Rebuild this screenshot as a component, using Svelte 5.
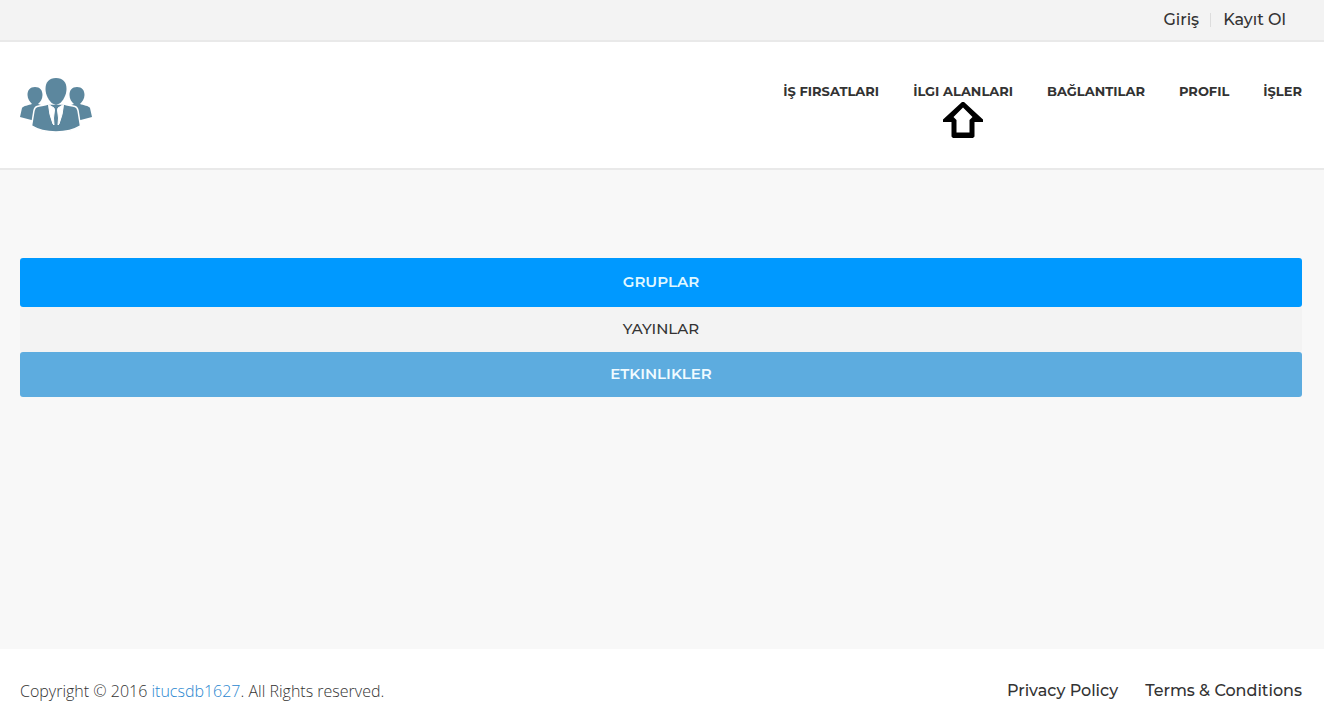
<script>
  const sections = ['İŞ FIRSATLARI', 'İLGI ALANLARI', 'BAĞLANTILAR', 'PROFIL', 'İŞLER'];
  const active = 'İLGI ALANLARI';
</script>

<div class="page">
  <div class="topbar">
    <a href="#giris">Giriş</a>
    <a href="#kayit">Kayıt Ol</a>
  </div>

  <header>
    <a class="logo" href="#home" aria-label="Ana sayfa">
      <svg viewBox="0 0 72 54" width="72" height="54" aria-hidden="true">
        <g fill="#5c879e">
          <path d="M15 9c5 0 7.500 3 7.500 8 0 4-2 7-4.500 9l6 2-5 16L0 39l2-9c1-2 7-3 10-4-2-2-4.500-5-4.500-9 0-5 2.500-8 7.500-8Z" />
          <path d="M57 9c-5 0-7.500 3-7.500 8 0 4 2 7 4.500 9l-6 2 5 16 19-5-2-9c-1-2-7-3-10-4 2-2 4.500-5 4.500-9 0-5-2.500-8-7.500-8Z" />
        </g>
        <path d="M28 26c-3 1-7 1.500-11 2.500-2 .5-2.500 2-3 4L11.500 48C18 52 26 54 36 54s18-2 24.500-6L58 32.500c-.5-2-1-3.500-3-4-4-1-8-1.500-11-2.500Z" fill="#5c879e" stroke="#fff" stroke-width="1.500" />
        <path d="M28.500 26.500 34 30l.5 2-1 8 .5 7-1-1q-4-10-4.500-19.500ZM43.500 26.500 38 30l-.5 2 1 8-.5 7 1-1q4-10 4.500-19.500Z" fill="#fff" stroke="#fff" stroke-width="1" />
        <path d="M36 0c7 0 10.500 4 10.500 11 0 6-3.500 12-7 14.500L36 27l-3.500-1.500C29 23 25.500 17 25.500 11 25.500 4 29 0 36 0Z" fill="#5c879e" />
      </svg>
    </a>
    <nav aria-label="Menü">
      {#each sections as name}
        <a href="#{name}">
          {name}
          {#if name === active}
            <svg class="pointer" viewBox="0 0 42 38" width="42" height="38" aria-hidden="true">
              <path d="M20 1h2l19 17.500V21h-8.500v14.500l-1.500 1.500H11l-1.500-1.500V21H1v-2.500Z" />
              <path d="M21 6.500 30.500 16 27.500 19v12.500h-13V19l-3-3Z" fill="#fff" />
            </svg>
          {/if}
        </a>
      {/each}
    </nav>
  </header>

  <main>
    <a class="bar groups" href="#gruplar">GRUPLAR</a>
    <a class="bar posts" href="#yayinlar">YAYINLAR</a>
    <a class="bar events" href="#etkinlikler">ETKINLIKLER</a>
  </main>

  <footer>
    <p>Copyright © 2016 <a href="#itucsdb1627">itucsdb1627</a>. All Rights reserved.</p>
    <div class="legal">
      <a href="#privacy">Privacy Policy</a>
      <a href="#terms">Terms &amp; Conditions</a>
    </div>
  </footer>
</div>

<style>
  :global(body) {
    margin: 0;
  }

  .page {
    min-height: 100vh;
    display: flex;
    flex-direction: column;
    background: #f8f8f8;
    color: #333;
    font-family: Montserrat, Inter, sans-serif;
    font-size: 15px;
    font-weight: 500;
  }

  a {
    color: inherit;
    text-decoration: none;
  }

  .topbar {
    display: flex;
    justify-content: flex-end;
    align-items: center;
    height: 40px;
    padding-right: 38px;
    background: #f3f3f3;
    border-bottom: 2px solid #e9e9e9;
    font-size: 16px;
    line-height: 14px;
  }

  .topbar a + a {
    margin-left: 11px;
    padding-left: 12px;
    border-left: 1px solid #ddd;
  }

  header {
    display: flex;
    justify-content: space-between;
    align-items: flex-start;
    padding: 36px 22px 36px 20px;
    background: #fff;
    border-bottom: 2px solid #e9e9e9;
  }

  .logo svg {
    display: block;
  }

  nav {
    display: flex;
    gap: 34px;
    padding-top: 3px;
    font-size: 13px;
    font-weight: 700;
    line-height: 20px;
  }

  nav a {
    position: relative;
  }

  .pointer {
    position: absolute;
    top: 20px;
    left: 50%;
    transform: translateX(-50%);
  }

  main {
    flex: 1;
    display: flex;
    flex-direction: column;
    padding: 88px 22px 88px 20px;
  }

  .bar {
    border-radius: 3px;
    padding: 12px;
    line-height: 20px;
    text-align: center;
  }

  .groups {
    padding: 14px 12px 15px;
    background: #09f;
    color: #e0f8ff;
    font-weight: 600;
  }

  .posts {
    padding-bottom: 13px;
    background: #f3f3f3;
  }

  .events {
    padding-bottom: 13px;
    background: #5dacdf;
    color: #f0fbff;
    font-weight: 600;
  }

  footer {
    display: flex;
    justify-content: space-between;
    align-items: center;
    padding: 30px 22px 11px 20px;
    background: #fff;
    font-size: 16px;
    line-height: 24px;
  }

  p {
    margin: 0;
    font-family: "Open Sans", sans-serif;
    font-weight: 350;
  }

  p a {
    color: #2a87d0;
  }

  .legal {
    display: flex;
    gap: 27px;
  }
</style>
